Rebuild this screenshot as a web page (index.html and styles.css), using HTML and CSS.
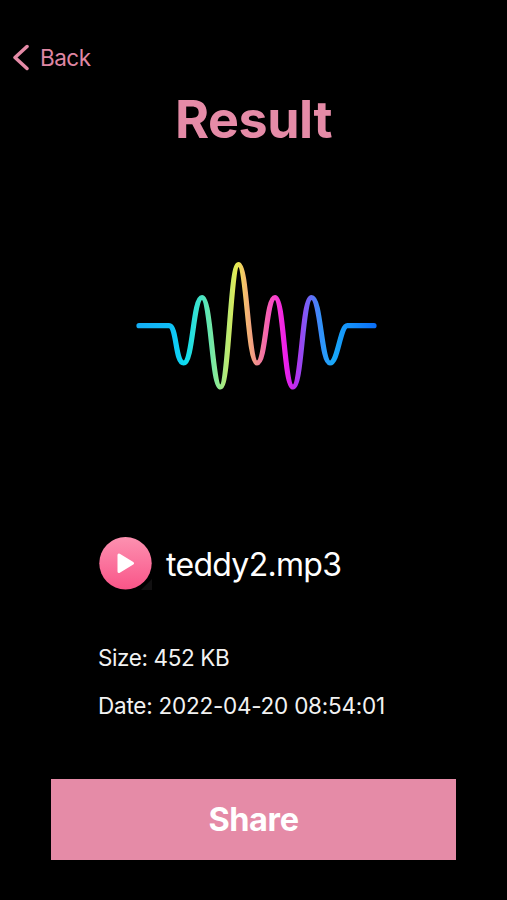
FILE: index.html
```html
<!DOCTYPE html>
<html lang="en">
<head>
<meta charset="utf-8">
<title>Result</title>
<link rel="stylesheet" href="styles.css">
</head>
<body>
<main class="screen">
  <nav class="nav">
    <a class="back">
      <svg class="chevron" width="18" height="28" viewBox="0 0 18 28"><path d="M16 3.500 4 14.500 16 25.500"/></svg>
      <span>Back</span>
    </a>
  </nav>
  <h1 class="title">Result</h1>
  <svg class="wave" width="247" height="134" viewBox="133 259 247 134">
    <defs>
      <linearGradient id="spectrum" gradientUnits="userSpaceOnUse" x1="137" y1="0" x2="376" y2="0">
        <stop offset="0" stop-color="#14aef5"/>
        <stop offset=".13" stop-color="#10bcf7"/>
        <stop offset=".2" stop-color="#0cdcf2"/>
        <stop offset=".27" stop-color="#48e4c4"/>
        <stop offset=".34" stop-color="#8fea92"/>
        <stop offset=".42" stop-color="#e9ea50"/>
        <stop offset=".45" stop-color="#f5bf6c"/>
        <stop offset=".5" stop-color="#f08e8e"/>
        <stop offset=".57" stop-color="#fa48c6"/>
        <stop offset=".62" stop-color="#f01eea"/>
        <stop offset=".66" stop-color="#bd2cec"/>
        <stop offset=".72" stop-color="#6e66f6"/>
        <stop offset=".77" stop-color="#3292fa"/>
        <stop offset=".82" stop-color="#18a8f8"/>
        <stop offset=".88" stop-color="#1593fa"/>
        <stop offset="1" stop-color="#0a6ef8"/>
      </linearGradient>
    </defs>
    <path class="wave-line" d="M139 325.700H169C177 325.700 175 363 183.700 363C193 363 193 297.500 202 297.500C211 297.500 212 387 220.400 387C229 387 230 264.500 238.500 264.500C247 264.500 248 363 257 363C266 363 266 297.500 275 297.500C284 297.500 284 387 293 387C302 387 302 297.500 311.500 297.500C321 297.500 321 363 330 363C338 363 340 325.700 347.500 325.700H374"/>
  </svg>
  <section class="track">
    <svg class="play" width="54" height="54" viewBox="0 0 54 54">
      <defs>
        <linearGradient id="disc" x1="0" y1="0" x2="0" y2="1">
          <stop offset="0" stop-color="#fc91b0"/>
          <stop offset=".5" stop-color="#fb739d"/>
          <stop offset="1" stop-color="#f95588"/>
        </linearGradient>
      </defs>
      <path fill="#111011" d="M53 42V53H42z"/>
      <circle cx="26.500" cy="26.200" r="26.200" fill="url(#disc)"/>
      <path class="play-mark" d="M20 18V34.500L33.500 26.200z"/>
    </svg>
    <span class="file">teddy2.mp3</span>
  </section>
  <section class="details">
    <p class="detail size">Size: 452 KB</p>
    <p class="detail date">Date: 2022-04-20 08:54:01</p>
  </section>
  <button class="share" type="button">Share</button>
</main>
</body>
</html>
```
FILE: styles.css
```css
* { box-sizing: border-box; }
body { margin: 0; background: #000; }
.screen {
  display: flex;
  flex-direction: column;
  width: 507px;
  height: 900px;
  padding-top: 42px;
  overflow: hidden;
  background: #000;
  color: #fff;
  font-family: Inter, "Liberation Sans", sans-serif;
}
.nav { height: 30px; padding-left: 11px; }
.back {
  display: flex;
  align-items: center;
  gap: 11px;
  height: 30px;
  color: #df86a3;
  font-size: 22.5px;
  letter-spacing: -0.5px;
}
.chevron {
  fill: none;
  stroke: #e58ba7;
  stroke-width: 3.5;
  stroke-linecap: round;
  stroke-linejoin: round;
}
.title {
  margin: 18px 0 0;
  color: #e58ba7;
  font-size: 52px;
  font-weight: 700;
  line-height: 60px;
  letter-spacing: -0.5px;
  text-align: center;
}
.wave { margin: 109px 0 0 133px; }
.wave-line {
  fill: none;
  stroke: url(#spectrum);
  stroke-width: 5.2;
  stroke-linecap: round;
  stroke-linejoin: round;
}
.track {
  display: flex;
  align-items: center;
  gap: 13px;
  height: 54px;
  margin: 144px 0 0 99px;
}
.play-mark {
  fill: #fff;
  stroke: #fff;
  stroke-width: 3;
  stroke-linejoin: round;
}
.file { font-size: 32px; letter-spacing: -0.7px; }
.details { margin: 52px 0 0 98px; }
.detail {
  margin: 0 0 18px;
  color: #f2f2f2;
  font-size: 22.5px;
  line-height: 30px;
  white-space: nowrap;
}
.size { letter-spacing: -0.4px; }
.date { letter-spacing: -0.24px; }
.share {
  width: 405px;
  height: 81px;
  margin: 40px 0 0 51px;
  padding: 0;
  border: 0;
  background: #e58ba7;
  color: #fff;
  font-family: inherit;
  font-size: 32.5px;
  font-weight: 700;
  letter-spacing: -0.4px;
}
```
